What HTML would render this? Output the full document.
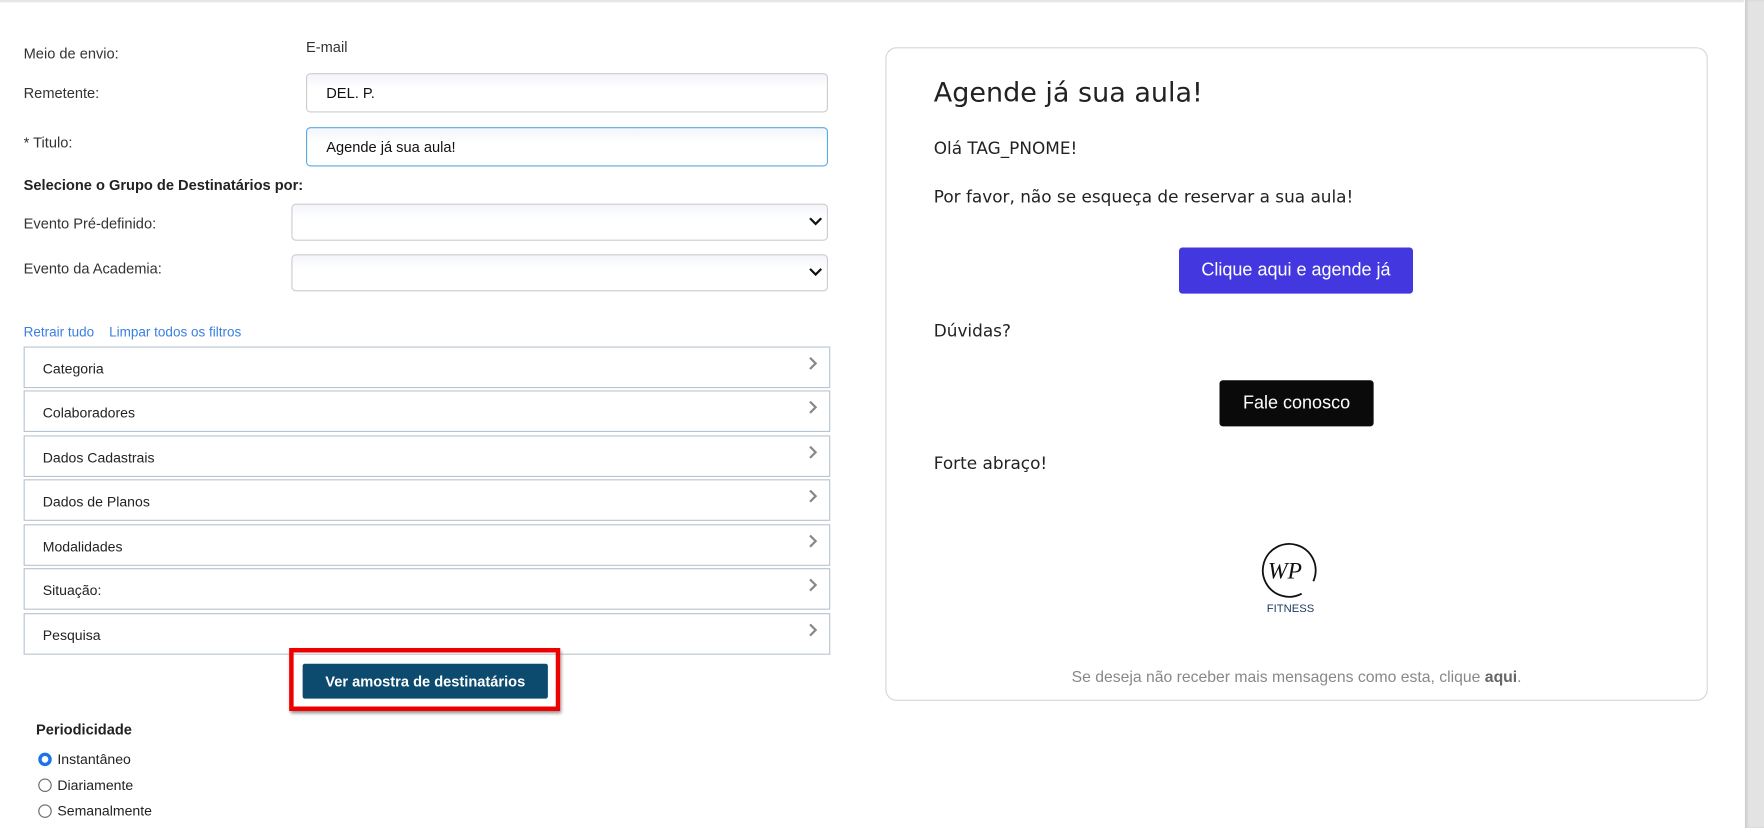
<!DOCTYPE html>
<html><head><meta charset="utf-8"><style>
html,body{margin:0;padding:0;width:1764px;height:828px;overflow:hidden;background:#fff}
#w{position:absolute;left:0;top:0;width:1568px;height:736px;transform:scale(1.125);transform-origin:0 0;font-family:"Liberation Sans",Arial,sans-serif;color:#333;font-size:13px}
.a{position:absolute}
.inp{position:absolute;border:1px solid #ccc;border-radius:4px;background:linear-gradient(#f3f5fb,#fff 40%);box-sizing:border-box;font-size:13px;color:#111;padding-left:17px}
.sel{position:absolute;left:259px;width:477px;height:33px;border:1px solid #ccc;border-radius:4px;box-sizing:border-box;background:linear-gradient(#f3f5fb,#fff 40%)}
.sel svg{position:absolute;right:4px;top:11px}
.acc{position:absolute;left:21px;width:717px;height:37px;border:1px solid #b8c4d0;box-sizing:border-box;background:#fff}
.acc span{position:absolute;left:16px;top:12px;font-size:12.5px;color:#222}
.acc svg{position:absolute;right:10px;top:8px}
.m{font-family:"DejaVu Sans",sans-serif;color:#222}
.rad{position:absolute;left:34px;font-size:12.5px;color:#222}
.rad i{display:inline-block;width:12px;height:12px;border:1px solid #666;border-radius:50%;vertical-align:-2px;margin-right:5px;box-sizing:border-box}
</style></head><body><div id="w">
<div class="a" style="left:0;top:0;width:1550px;height:2px;background:#e6e6e6"></div>
<div class="a" style="left:1551px;top:0;width:17px;height:736px;background:#e3e3e3;box-shadow:inset 2px 0 2px #ccc"></div>
<div class="a" style="left:21px;top:40px">Meio de envio:</div>
<div class="a" style="left:272px;top:34px">E-mail</div>
<div class="a" style="left:21px;top:75px">Remetente:</div>
<div class="inp" style="left:272px;top:65px;width:464px;height:35px;line-height:33px">DEL. P.</div>
<div class="a" style="left:21px;top:119px">* Titulo:</div>
<div class="inp" style="left:272px;top:113px;width:464px;height:35px;line-height:33px;border-color:#5aa9e0">Agende já sua aula!</div>
<div class="a" style="left:21px;top:157px;font-weight:bold;color:#222">Selecione o Grupo de Destinatários por:</div>
<div class="a" style="left:21px;top:191px">Evento Pré-definido:</div>
<div class="sel" style="top:181px"><svg width="12" height="8"><path d="M1 1l5 5 5-5" stroke="#111" stroke-width="2" fill="none"/></svg></div>
<div class="a" style="left:21px;top:231px">Evento da Academia:</div>
<div class="sel" style="top:226px"><svg width="12" height="8"><path d="M1 1l5 5 5-5" stroke="#111" stroke-width="2" fill="none"/></svg></div>
<div class="a" style="left:21px;top:288px;color:#3a7fe0;font-size:12px">Retrair tudo &nbsp;&nbsp; Limpar todos os filtros</div>
<div class="acc" style="top:308px"><span>Categoria</span><svg width="8" height="12"><path d="M1 1l5 5-5 5" stroke="#888" stroke-width="2" fill="none"/></svg></div>
<div class="acc" style="top:347px"><span>Colaboradores</span><svg width="8" height="12"><path d="M1 1l5 5-5 5" stroke="#888" stroke-width="2" fill="none"/></svg></div>
<div class="acc" style="top:387px"><span>Dados Cadastrais</span><svg width="8" height="12"><path d="M1 1l5 5-5 5" stroke="#888" stroke-width="2" fill="none"/></svg></div>
<div class="acc" style="top:426px"><span>Dados de Planos</span><svg width="8" height="12"><path d="M1 1l5 5-5 5" stroke="#888" stroke-width="2" fill="none"/></svg></div>
<div class="acc" style="top:466px"><span>Modalidades</span><svg width="8" height="12"><path d="M1 1l5 5-5 5" stroke="#888" stroke-width="2" fill="none"/></svg></div>
<div class="acc" style="top:505px"><span>Situação:</span><svg width="8" height="12"><path d="M1 1l5 5-5 5" stroke="#888" stroke-width="2" fill="none"/></svg></div>
<div class="acc" style="top:545px"><span>Pesquisa</span><svg width="8" height="12"><path d="M1 1l5 5-5 5" stroke="#888" stroke-width="2" fill="none"/></svg></div>
<div class="a" style="left:257px;top:576px;width:241px;height:56px;box-sizing:border-box;border:4px solid #ee0000;box-shadow:1px 2px 3px #888"></div>
<div class="a" style="left:269px;top:590px;width:218px;height:31px;background:#0c4a6e;color:#fff;font-weight:bold;text-align:center;line-height:31px;border-radius:2px">Ver amostra de destinatários</div>
<div class="a" style="left:32px;top:641px;font-weight:bold;color:#222">Periodicidade</div>
<div class="rad" style="top:668px"><i style="border:3px solid #1a73e8;box-shadow:inset 0 0 0 1.5px #fff"></i>Instantâneo</div>
<div class="rad" style="top:691px"><i></i>Diariamente</div>
<div class="rad" style="top:714px"><i></i>Semanalmente</div>

<div class="a" style="left:787px;top:42px;width:731px;height:581px;border:1px solid #d6d6d6;border-radius:10px;box-sizing:border-box"></div>
<div class="a m" style="left:830px;top:68px;font-size:24px">Agende já sua aula!</div>
<div class="a m" style="left:830px;top:123px;font-size:15px">Olá TAG_PNOME!</div>
<div class="a m" style="left:830px;top:166px;font-size:15px">Por favor, não se esqueça de reservar a sua aula!</div>
<div class="a" style="left:1048px;top:220px;width:208px;height:41px;background:#4338e0;border-radius:3px;color:#fff;font-size:16px;text-align:center;line-height:41px">Clique aqui e agende já</div>
<div class="a m" style="left:830px;top:285px;font-size:15px">Dúvidas?</div>
<div class="a" style="left:1084px;top:338px;width:137px;height:41px;background:#0a0a0a;border-radius:3px;color:#fff;font-size:16px;text-align:center;line-height:41px">Fale conosco</div>
<div class="a m" style="left:830px;top:403px;font-size:15px">Forte abraço!</div>
<svg class="a" style="left:1116px;top:480px" width="60" height="70"><circle cx="30" cy="27" r="23.5" stroke="#111" stroke-width="1.6" fill="none" stroke-dasharray="132 16" transform="rotate(62 30 27)"/><text x="11" y="34" font-family="Liberation Serif,serif" font-style="italic" font-size="21" fill="#111">WP</text><text x="10" y="64" font-family="Liberation Sans,sans-serif" font-size="10" fill="#1f3a5f">FITNESS</text></svg>
<div class="a" style="left:787px;top:593px;width:731px;text-align:center;color:#888;font-size:14px">Se deseja não receber mais mensagens como esta, clique <b style="color:#666">aqui</b>.</div>
</div></body></html>
